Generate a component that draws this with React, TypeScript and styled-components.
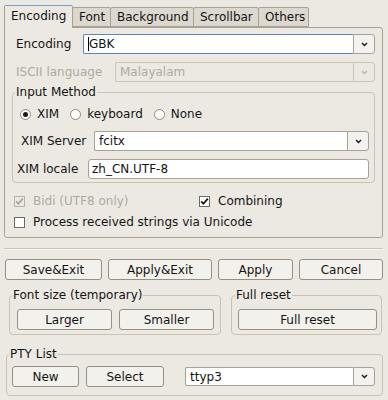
import React from 'react';
import styled, { createGlobalStyle } from 'styled-components';

const GlobalStyle = createGlobalStyle`
  * {
    box-sizing: border-box;
  }
  html,
  body {
    margin: 0;
    padding: 0;
    background: #ece9e2;
  }
  body {
    font-family: 'DejaVu Sans', 'Liberation Sans', sans-serif;
    font-size: 12px;
    color: #141414;
  }
`;

const tabs = [
  { label: 'Encoding', width: 69, active: true },
  { label: 'Font', width: 39 },
  { label: 'Background', width: 84 },
  { label: 'Scrollbar', width: 66 },
  { label: 'Others', width: 51 },
];

const Window = styled.div`
  width: 388px;
  height: 400px;
  padding-top: 5px;
  overflow: hidden;
`;

const TabBar = styled.div`
  position: relative;
  z-index: 1;
  display: flex;
  align-items: flex-end;
  height: 22px;
  padding-left: 4px;
`;

const Tab = styled.div<{ $w: number; $active?: boolean }>`
  width: ${(p) => p.$w}px;
  height: ${(p) => (p.$active ? 23 : 20)}px;
  margin-right: -1px;
  margin-bottom: ${(p) => (p.$active ? -1 : 0)}px;
  padding: 0 0 ${(p) => (p.$active ? 2 : 0)}px 6px;
  display: flex;
  align-items: center;
  white-space: nowrap;
  overflow: hidden;
  background: ${(p) => (p.$active ? '#ece9e2' : '#dcd8cf')};
  border: 1px solid #a8a194;
  border-top-color: ${(p) => (p.$active ? '#7d9ecb' : '#a8a194')};
  border-bottom: ${(p) => (p.$active ? 'none' : '1px solid #a8a194')};
  border-radius: 2px 2px 0 0;
`;

const Panel = styled.div`
  margin: 0 5px 0 4px;
  padding: 6px 7px 7px 7px;
  display: flex;
  flex-direction: column;
  border: 1px solid #a8a194;
  border-radius: 0 3px 3px 3px;
`;

const FieldRow = styled.div<{ $top?: number }>`
  display: flex;
  align-items: center;
  height: 20px;
  margin-top: ${(p) => p.$top ?? 0}px;
`;

const Label = styled.span<{ $w: number; $indent?: number; $disabled?: boolean }>`
  flex: none;
  width: ${(p) => p.$w}px;
  padding-left: ${(p) => p.$indent ?? 0}px;
  white-space: nowrap;
  color: ${(p) => (p.$disabled ? '#b0aa9d' : '#141414')};
`;

const ComboBox = styled.div<{ $h?: number }>`
  flex: 1;
  display: flex;
  height: ${(p) => p.$h ?? 20}px;
`;

const ComboField = styled.div<{ $focused?: boolean; $disabled?: boolean }>`
  flex: 1;
  display: flex;
  align-items: center;
  padding-left: 4px;
  background: ${(p) => (p.$disabled ? 'transparent' : '#fff')};
  color: ${(p) => (p.$disabled ? '#b0aa9d' : '#141414')};
  border: 1px solid
    ${(p) => (p.$focused ? '#5b87c0' : p.$disabled ? '#cbc5b8' : '#a8a194')};
  border-right: none;
  border-radius: 2px 0 0 2px;
`;

const Caret = styled.span`
  width: 1px;
  height: 14px;
  background: #000;
`;

const ComboButton = styled.div<{ $disabled?: boolean }>`
  flex: none;
  width: 22px;
  display: flex;
  align-items: center;
  justify-content: center;
  background: ${(p) => (p.$disabled ? '#ece9e2' : '#f4f2ee')};
  border: 1px solid ${(p) => (p.$disabled ? '#cbc5b8' : '#a8a194')};
  border-radius: 0 3px 3px 0;
`;

const TextField = styled.div`
  flex: 1;
  height: 20px;
  display: flex;
  align-items: center;
  padding-left: 3px;
  background: #fff;
  border: 1px solid #a8a194;
  border-radius: 3px;
`;

const GroupBox = styled.fieldset<{ $w?: number }>`
  margin: 0;
  padding: 0;
  min-width: 0;
  ${(p) => (p.$w ? `width: ${p.$w}px; flex: none;` : '')}
  border: 1px solid #c9c3b6;
  border-radius: 4px;
`;

const GroupTitle = styled.legend<{ $shift?: number }>`
  margin-left: ${(p) => p.$shift ?? 2}px;
  padding: 0 1px;
  line-height: 14px;
  font-size: 12px;
`;

const GroupBody = styled.div<{ $pad: string }>`
  display: flex;
  flex-direction: column;
  padding: ${(p) => p.$pad};
`;

const RadioRow = styled.div`
  display: flex;
  align-items: center;
  gap: 11px;
  height: 16px;
  padding-left: 3px;
`;

const Option = styled.label`
  display: flex;
  align-items: center;
  gap: 6px;
  white-space: nowrap;
`;

const RadioMark = styled.span<{ $checked?: boolean }>`
  flex: none;
  width: 11px;
  height: 11px;
  display: flex;
  align-items: center;
  justify-content: center;
  background: #fff;
  border: 1px solid #8f887b;
  border-radius: 50%;
  &::after {
    content: '';
    width: 5px;
    height: 5px;
    border-radius: 50%;
    background: ${(p) => (p.$checked ? '#1a1a1a' : 'transparent')};
  }
`;

const CheckGrid = styled.div`
  display: grid;
  grid-template-columns: 185px 1fr;
  grid-auto-rows: 16px;
  row-gap: 5px;
  margin-top: 10px;
  padding-left: 2px;
`;

const CheckMark = styled.span<{ $disabled?: boolean }>`
  flex: none;
  width: 11px;
  height: 11px;
  display: flex;
  align-items: center;
  justify-content: center;
  background: ${(p) => (p.$disabled ? '#ece9e2' : '#fff')};
  border: 1px solid ${(p) => (p.$disabled ? '#b9b3a6' : '#6f6a60')};
`;

const CheckText = styled.span<{ $disabled?: boolean }>`
  margin-left: 2px;
  color: ${(p) => (p.$disabled ? '#b0aa9d' : '#141414')};
`;

const SpanAll = styled.div`
  grid-column: 1 / span 2;
  display: flex;
`;

const Separator = styled.div`
  margin: 10px 5px 0 4px;
  border-top: 1px solid #cbc5b8;
  border-bottom: 1px solid #f8f6f1;
`;

const ActionRow = styled.div`
  display: grid;
  grid-template-columns: 97px 104px 75px 84px;
  justify-content: space-between;
  margin: 9px 5px 0 5px;
`;

const Button = styled.button<{ $w?: number }>`
  ${(p) => (p.$w ? `width: ${p.$w}px; flex: none;` : 'flex: 1;')}
  height: 21px;
  padding: 0;
  font: inherit;
  color: #141414;
  background: #f3f1ec;
  border: 1px solid #978f82;
  border-radius: 3px;
  white-space: nowrap;
`;

const GroupRow = styled.div`
  display: flex;
  gap: 10px;
  margin: 8px 6px 0 9px;
`;

const ButtonLine = styled.div<{ $gap: number }>`
  display: flex;
  align-items: center;
  gap: ${(p) => p.$gap}px;
`;

const PtyBox = styled.div`
  margin: 12px 5px 0 6px;
`;

const ComboGap = styled.div`
  flex: 1;
  display: flex;
  margin-left: 14px;
`;

const Arrow = ({ disabled }: { disabled?: boolean }) => (
  <svg width="7" height="5" viewBox="0 0 7 5">
    <path
      d="M1 1 L3.5 3.6 L6 1"
      fill="none"
      stroke={disabled ? '#bdb7aa' : '#1a1a1a'}
      strokeWidth="1.4"
    />
  </svg>
);

const Tick = ({ disabled }: { disabled?: boolean }) => (
  <svg width="9" height="9" viewBox="0 0 9 9">
    <path
      d="M1.2 4.4 L3.4 6.8 L7.8 1.6"
      fill="none"
      stroke={disabled ? '#a9a397' : '#111'}
      strokeWidth="1.7"
    />
  </svg>
);

const App = () => {
  return (
    <Window>
      <GlobalStyle />
      <TabBar>
        {tabs.map((t) => (
          <Tab key={t.label} $w={t.width} $active={t.active}>
            {t.label}
          </Tab>
        ))}
      </TabBar>
      <Panel>
        <FieldRow>
          <Label $w={71} $indent={4}>
            Encoding
          </Label>
          <ComboBox>
            <ComboField $focused>
              <Caret />
              GBK
            </ComboField>
            <ComboButton>
              <Arrow />
            </ComboButton>
          </ComboBox>
        </FieldRow>
        <FieldRow $top={8}>
          <Label $w={103} $indent={4} $disabled>
            ISCII language
          </Label>
          <ComboBox>
            <ComboField $disabled>Malayalam</ComboField>
            <ComboButton $disabled>
              <Arrow disabled />
            </ComboButton>
          </ComboBox>
        </FieldRow>

        <GroupBox style={{ marginTop: 3 }}>
          <GroupTitle>Input Method</GroupTitle>
          <GroupBody $pad="7px 5px 3px 4px">
            <RadioRow>
              <Option>
                <RadioMark $checked />
                XIM
              </Option>
              <Option>
                <RadioMark />
                keyboard
              </Option>
              <Option>
                <RadioMark />
                None
              </Option>
            </RadioRow>
            <FieldRow $top={9}>
              <Label $w={77} $indent={4}>
                XIM Server
              </Label>
              <ComboBox>
                <ComboField>fcitx</ComboField>
                <ComboButton>
                  <Arrow />
                </ComboButton>
              </ComboBox>
            </FieldRow>
            <FieldRow $top={8}>
              <Label $w={71}>XIM locale</Label>
              <TextField>zh_CN.UTF-8</TextField>
            </FieldRow>
          </GroupBody>
        </GroupBox>

        <CheckGrid>
          <Option>
            <CheckMark $disabled>
              <Tick disabled />
            </CheckMark>
            <CheckText $disabled>Bidi (UTF8 only)</CheckText>
          </Option>
          <Option>
            <CheckMark>
              <Tick />
            </CheckMark>
            <CheckText>Combining</CheckText>
          </Option>
          <SpanAll>
            <Option>
              <CheckMark />
              <CheckText>Process received strings via Unicode</CheckText>
            </Option>
          </SpanAll>
        </CheckGrid>
      </Panel>

      <Separator />

      <ActionRow>
        <Button>Save&amp;Exit</Button>
        <Button>Apply&amp;Exit</Button>
        <Button>Apply</Button>
        <Button>Cancel</Button>
      </ActionRow>

      <GroupRow>
        <GroupBox $w={212}>
          <GroupTitle>Font size (temporary)</GroupTitle>
          <GroupBody $pad="7px 6px 4px 7px">
            <ButtonLine $gap={7}>
              <Button>Larger</Button>
              <Button>Smaller</Button>
            </ButtonLine>
          </GroupBody>
        </GroupBox>
        <GroupBox style={{ flex: 1 }}>
          <GroupTitle $shift={3}>Full reset</GroupTitle>
          <GroupBody $pad="7px 4px 4px 6px">
            <ButtonLine $gap={0}>
              <Button>Full reset</Button>
            </ButtonLine>
          </GroupBody>
        </GroupBox>
      </GroupRow>

      <PtyBox>
        <GroupBox>
          <GroupTitle>PTY List</GroupTitle>
          <GroupBody $pad="5px 7px 8px 5px">
            <ButtonLine $gap={7}>
              <Button $w={67}>New</Button>
              <Button $w={78}>Select</Button>
              <ComboGap>
                <ComboBox $h={19}>
                  <ComboField>ttyp3</ComboField>
                  <ComboButton>
                    <Arrow />
                  </ComboButton>
                </ComboBox>
              </ComboGap>
            </ButtonLine>
          </GroupBody>
        </GroupBox>
      </PtyBox>
    </Window>
  );
};

export default App;
